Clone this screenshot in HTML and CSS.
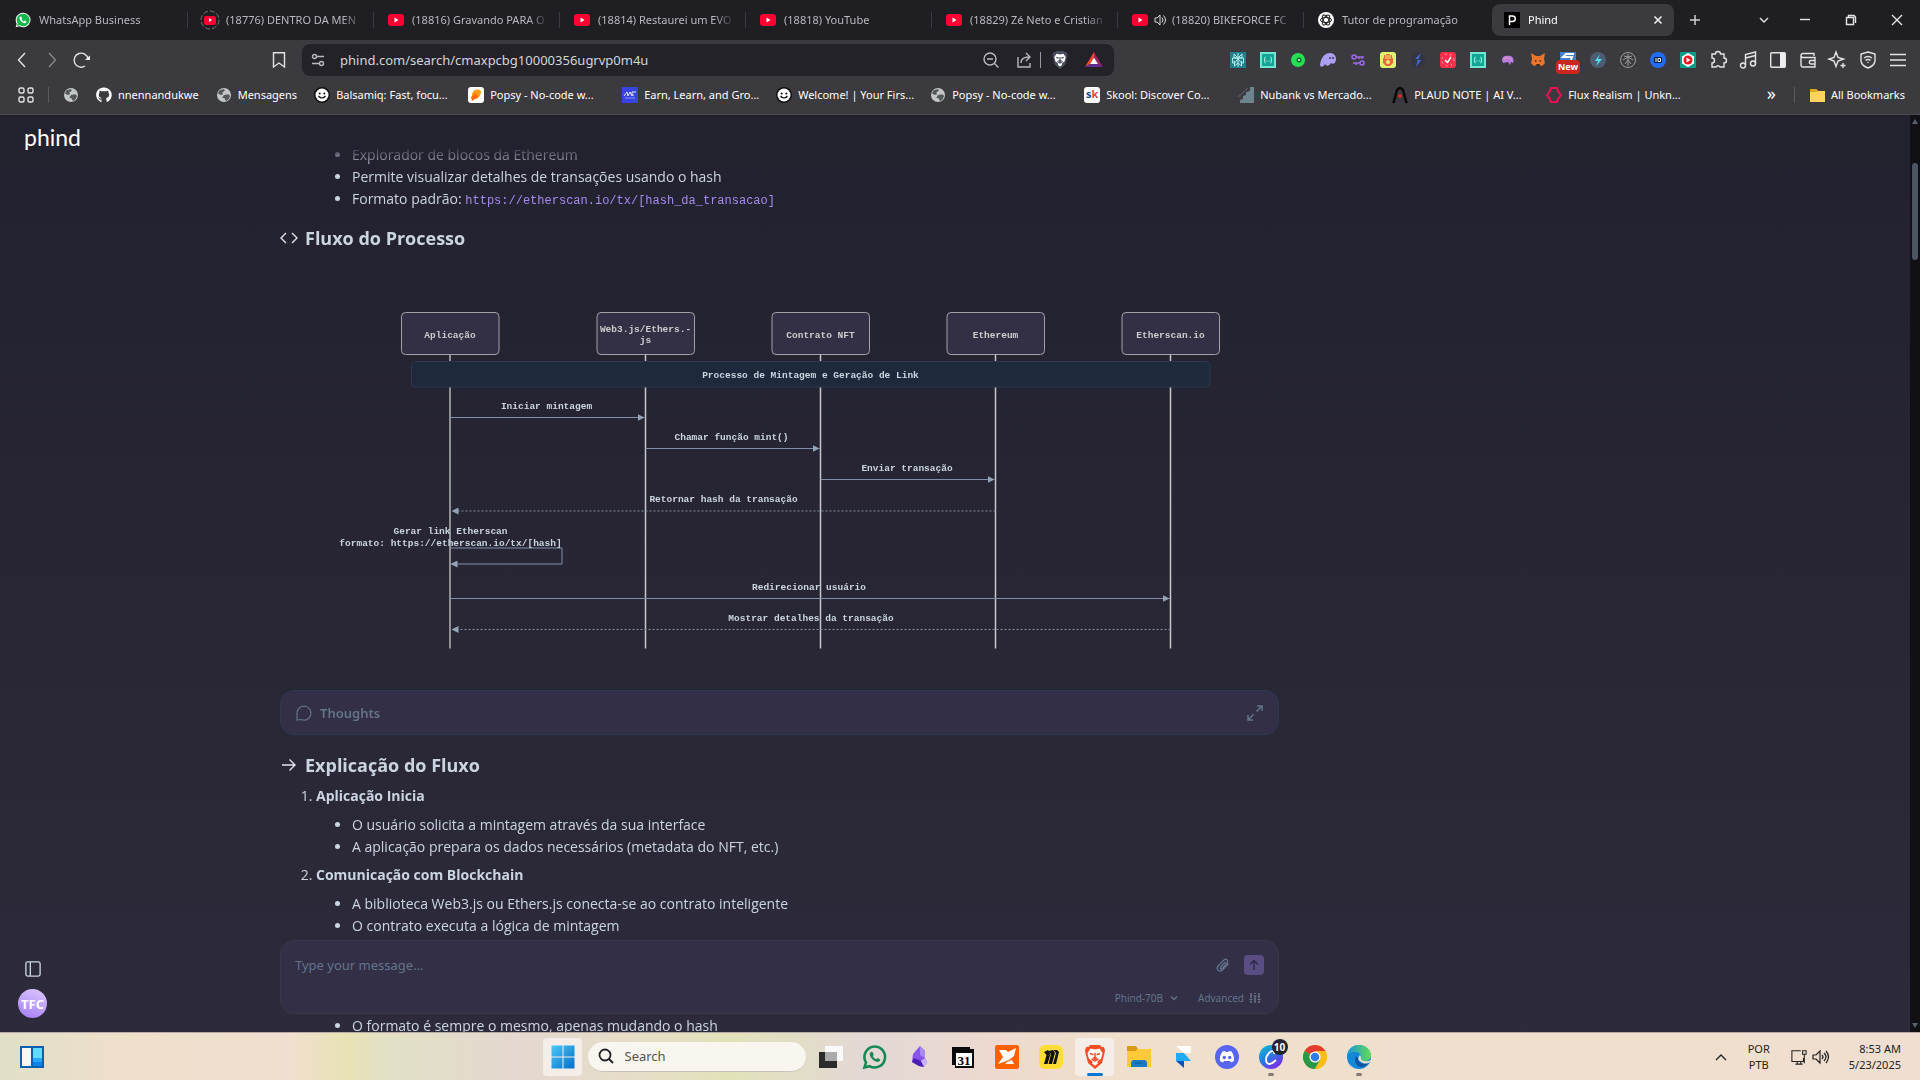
FILE: index.html
```html
<!DOCTYPE html>
<html lang="pt">
<head>
<meta charset="utf-8">
<title>Phind</title>
<link rel="stylesheet" href="styles.css">
</head>
<body>
<svg class="defs" aria-hidden="true">
  <symbol id="yt" viewBox="0 0 16 16"><rect y="2" width="16" height="12" rx="3" fill="#ff0033"/><path d="M6.500 5.500v5L10.500 8z" fill="#fff"/></symbol>
  <symbol id="wa" viewBox="0 0 24 24"><path d="M12 1a11 11 0 0 0-9.500 16.500L1 23l5.700-1.500A11 11 0 1 0 12 1z" fill="#fff"/><path d="M12 2.500a9.500 9.500 0 0 0-8 14.500L3 21l4.200-1A9.500 9.500 0 1 0 12 2.500z" fill="#12b84a"/><path d="M8.200 6.800c-1.500.6-2 2.600-.7 4.900 1.500 2.700 4 4.800 6.600 5.200 1.700.2 3.100-1 3.100-2.500l-2.500-1.500-1.400 1.300c-1.600-.6-2.700-1.700-3.500-3.200l1-1.300-1.300-2.700z" fill="#fff"/></symbol>
  <symbol id="globe" viewBox="0 0 16 16"><circle cx="8" cy="8" r="8" fill="#c4c7c9"/><path d="M3 2.500 8 1l1 2-3 2 1 2-3 1L1 6zM8 8l5-1 2 2-2 4-3 2-1-3-3-1z" fill="#55585b"/></symbol>
  <symbol id="smile" viewBox="0 0 16 16"><circle cx="8" cy="8" r="8" fill="#111"/><circle cx="8" cy="8" r="6.500" fill="#fff"/><circle cx="5.700" cy="6.500" r="1" fill="#111"/><circle cx="10.300" cy="6.500" r="1" fill="#111"/><path d="M4.500 9q3.500 4 7 0" fill="none" stroke="#111" stroke-width="1.200"/></symbol>
  <symbol id="code" viewBox="0 0 16 16"><path d="M0 0h16v16H0z" fill="#6ee7d5"/><path d="M2 2h12v12H2z" fill="#12a594"/><path d="M5.500 5c-1.500 0 0 3-1.500 3 1.500 0 0 3 1.500 3m5-6c1.500 0 0 3 1.500 3-1.500 0 0 3-1.500 3M6.500 9h1m1.500 0h.8" fill="none" stroke="#d6fff8"/></symbol>
  <symbol id="lion" viewBox="0 0 24 24"><path d="m7 0-1.500 2-2-.2L2 5l.5 3L5 18l7 6 7-6 2.500-10 .5-3-1.500-3.200-2 .2L17 0z"/><path d="M7.500 3.500 4.500 8l1.300 5.500 3.700 3-.3 2 2.800 2.200 2.800-2.200-.3-2 3.700-3L19.500 8l-3-4.500-4.500 1z" fill="#fff"/><path d="m7 8.500 3.500 1.200M17 8.500l-3.500 1.200M8.500 14l3.500 2 3.500-2M12 8v5m-2-.5 2 1.500 2-1.500" fill="none" stroke="currentColor" stroke-width="1.500"/></symbol>
</svg>

<header class="browser">
  <nav class="tabs">
    <a class="tab" href="#"><svg class="i16"><use href="#wa"/></svg><span>WhatsApp Business</span></a>
    <a class="tab" href="#"><svg class="i16 loading" viewBox="0 0 16 16"><circle cx="8" cy="8" r="9" fill="none" stroke="#777" stroke-dasharray="5 2"/><rect x="2" y="4" width="12" height="9" rx="2" fill="#f03"/><path d="M7 6v4l3-2z" fill="#fff"/></svg><span>(18776) DENTRO DA MEN</span></a>
    <a class="tab" href="#"><svg class="i16"><use href="#yt"/></svg><span>(18816) Gravando PARA O</span></a>
    <a class="tab" href="#"><svg class="i16"><use href="#yt"/></svg><span>(18814) Restaurei um EVO</span></a>
    <a class="tab" href="#"><svg class="i16"><use href="#yt"/></svg><span>(18818) YouTube</span></a>
    <a class="tab" href="#"><svg class="i16"><use href="#yt"/></svg><span>(18829) Zé Neto e Cristian</span></a>
    <a class="tab sound" href="#"><svg class="i16"><use href="#yt"/></svg><svg class="i12" viewBox="0 0 12 12"><path d="M1 4h2l3-3v10L3 8H1z" fill="none" stroke="#ddd"/><path d="M8 3.500q2 2.500 0 5M9.500 1.500q4 4.500 0 9" fill="none" stroke="#ddd"/></svg><span>(18820) BIKEFORCE FC</span></a>
    <a class="tab" href="#"><svg class="i16" viewBox="0 0 16 16"><circle cx="8" cy="8" r="8" fill="#fff"/><g fill="none" stroke="#222"><ellipse cx="8" cy="8" rx="5.500" ry="2.600"/><ellipse cx="8" cy="8" rx="5.500" ry="2.600" transform="rotate(60 8 8)"/><ellipse cx="8" cy="8" rx="5.500" ry="2.600" transform="rotate(120 8 8)"/></g></svg><span>Tutor de programação</span></a>
    <a class="tab active" href="#"><svg class="i16" viewBox="0 0 16 16"><path d="M0 0h16v16H0z"/><path d="M5.500 13V4h1.500m-1.500 5.500h3a2.700 2.700 0 0 0 0-5.500H7" fill="none" stroke="#fff" stroke-width="1.500"/></svg><span>Phind</span><svg class="i12" viewBox="0 0 12 12"><path d="m2.500 2.500 7 7m0-7-7 7" stroke="#eee" stroke-width="1.600"/></svg></a>
    <button class="plus" aria-label="New tab"><svg class="i12" viewBox="0 0 12 12"><path d="M6 1v10M1 6h10" stroke="#d0d0d3" stroke-width="1.500"/></svg></button>
    <div class="window-buttons">
      <button aria-label="Search tabs"><svg class="i12" viewBox="0 0 12 12"><path d="m2 4 4 4 4-4" class="line" stroke-width="1.800"/></svg></button>
      <button aria-label="Minimize"><svg class="i12" viewBox="0 0 12 12"><path d="M1 5.500h10" class="line"/></svg></button>
      <button aria-label="Restore"><svg class="i12" viewBox="0 0 12 12"><path d="M1.500 3.500h7v7h-7zM3.500 3V1.500H9l1.500 1.500v6" class="line"/></svg></button>
      <button aria-label="Close"><svg class="i12" viewBox="0 0 12 12"><path d="m1 1 10 10m0-10L1 11" class="line"/></svg></button>
    </div>
  </nav>

  <div class="toolbar">
    <div class="history">
      <button aria-label="Back"><svg class="i16" viewBox="0 0 16 16"><path d="M11 1 4.500 8l6.500 7" class="line" stroke-width="1.700"/></svg></button>
      <button aria-label="Forward" class="off"><svg class="i16" viewBox="0 0 16 16"><path d="m5 1 6.500 7L5 15" class="line" stroke-width="1.500"/></svg></button>
      <button aria-label="Reload"><svg class="i16" viewBox="0 0 16 16"><path d="M11 14a7 7 0 1 1 3-7" class="line" stroke-width="1.600"/><path d="M16 3.500V8h-5z" fill="#eee"/></svg></button>
    </div>
    <button class="mark" aria-label="Bookmark"><svg class="i16" viewBox="0 0 16 16"><path d="M2.500.7h11V15L8 11l-5.500 4z" class="line" stroke-width="1.500"/></svg></button>
    <div class="address">
      <svg class="w14" viewBox="0 0 14 14"><g class="line"><circle cx="3.500" cy="3.500" r="2"/><path d="M6 3.500h7M1 10.500h7"/><circle cx="10.500" cy="10.500" r="2"/></g></svg>
      <input type="text" aria-label="Address" value="phind.com/search/cmaxpcbg10000356ugrvp0m4u">
      <svg class="i16" viewBox="0 0 16 16"><g class="line"><circle cx="7" cy="7" r="6"/><path d="m11.500 11.500 4 4M4 7h6"/></g></svg>
      <svg class="i16 share" viewBox="0 0 16 16"><path d="M1 5v10h12v-4M4 11c0-4 3-6 8-6m-3-4 4 4-4 4" class="line"/></svg>
      <i class="rule"></i>
      <svg class="i18 shield"><use href="#lion"/></svg>
      <svg class="i18" viewBox="0 0 18 18"><path d="M9 1 0 16l5-3 4-7z" fill="#ff4724"/><path d="m9 1 9 15-5-3-4-7z" fill="#9e1f63"/><path d="m5 13-5 3h18l-5-3z" fill="#662d91"/><path d="M9 6.500 13 13H5z" fill="#fff"/></svg>
    </div>
    <div class="extensions">
      <svg class="i16" viewBox="0 0 16 16"><path d="M0 0h16v16H0z" fill="#20808d"/><path d="M8 1v14M4 2l4 4 4-4v4H4zM2.500 6h11v5h-2L8 7l-3.500 4h-2zM4.500 9v5L8 11l3.500 3V9" fill="none" stroke="#b9ecec"/></svg>
      <svg class="i16"><use href="#code"/></svg>
      <svg class="i16" viewBox="0 0 16 16"><circle cx="8" cy="8" r="7" fill="#25e052"/><circle cx="9" cy="8" r="2.500" fill="#0b6627"/><circle cx="9" cy="8" r="1" fill="#fff"/></svg>
      <svg class="i16" viewBox="0 0 16 16"><path d="M0 13C1 5 5 1 10 1c4 0 6 3 6 6 0 4-3 6-5 4-2 3-4 4-6 1-2 4-5 3-5 1z" fill="#ab9ff2"/><path d="M10 5v2m3-2v2" stroke="#3d3455" stroke-width="1.500"/></svg>
      <svg class="i16" viewBox="0 0 16 16" fill="none" stroke="#9b6be8" stroke-width="1.500"><circle cx="4" cy="5" r="2"/><path d="M6 5h8M9 5v2m3-2v2"/><circle cx="12" cy="11" r="2"/><path d="M10 11H3m3 0v2"/></svg>
      <svg class="i16" viewBox="0 0 16 16"><rect width="16" height="16" rx="3" fill="#dff56b"/><path d="M3 6h1V3h2V2h4v1h2v3h1v5l-3 3H6l-3-3z" fill="#ee6741"/><path d="M6 3v4m2-4v4m2-4v4" stroke="#dff56b"/><circle cx="8" cy="10" r="2" fill="#dff56b"/></svg>
      <svg class="i16" viewBox="0 0 16 16"><circle cx="8" cy="8" r="7" fill="#343442"/><path d="M11 1 5 7h3l-2 8 5-7H8z" fill="#416ee0"/></svg>
      <svg class="i16" viewBox="0 0 16 16"><rect width="16" height="16" rx="3" fill="#fa304a"/><path d="m5 8 2.500 2.500L11 5" fill="none" stroke="#fff" stroke-width="1.500"/><circle cx="8" cy="8" r="6" fill="none" stroke="#fff" stroke-dasharray="1 4"/></svg>
      <svg class="i16"><use href="#code"/></svg>
      <svg class="i16" viewBox="0 0 16 16"><path d="M2 8c0-4 4-5 7-4 3-1 6 4 4 7l-2-1-1 3-2-3-5 1z" fill="#b67be0"/><path d="M4 7q3-3 8 1" fill="none" stroke="#f59dac"/></svg>
      <svg class="i16" viewBox="0 0 16 16"><path d="m1 1 5 3h4l5-3-1 6 1 4-3 3-3-1H7l-3 1-3-3 1-4z" fill="#e8752b"/><path d="m5 8 2 1-2 1zm6 0-2 1 2 1zM6.500 12h3v2h-3z" fill="#40251a"/></svg>
      <span class="new"><svg class="i16" viewBox="0 0 16 16"><path d="M0 0h16v8H0z" fill="#3f80c8"/><path d="M14 2H6l-3 3h9l-1 3" stroke="#fff" stroke-width="2" fill="none"/></svg><b>New</b></span>
      <svg class="i16" viewBox="0 0 16 16"><circle cx="8" cy="8" r="8" fill="#4d5d74"/><path d="M10 2 5 9h3l-2 5 6-7H8z" fill="#52e3e8"/></svg>
      <svg class="i16" viewBox="0 0 16 16" fill="none" stroke="#9d9da0"><circle cx="8" cy="8" r="7.500"/><path d="M8 5v9M8 5l5 3M8 5 3 8m5 0 3 4M8 8l-3 4M4 4l4 1 4-1M8 2v3"/></svg>
      <svg class="i16" viewBox="0 0 16 16"><circle cx="8" cy="8" r="8" fill="#1f6df2"/><rect x="4" y="5" width="8" height="6" rx="1" fill="#071b46"/><path d="M6 6v4m2-3.500h2.500v3H8z" stroke="#fff" fill="none"/></svg>
      <svg class="i16" viewBox="0 0 16 16"><path d="M0 0h16v16H0z" fill="#0d9f86"/><path d="m8 1 6 3.500v7L8 15l-6-3.500v-7z" fill="#fff"/><circle cx="8" cy="8" r="4.500" fill="#e51b23"/><path d="M6.500 5.500v5l4-2.500z" fill="#fff"/></svg>
      <svg class="i18" viewBox="0 0 18 18"><path d="M3 3h3.500a2.500 2.500 0 0 1 5 0H15v4a2.500 2.500 0 0 1 0 5v4h-4a2.200 2.200 0 0 0-4 0H3v-4a2.500 2.500 0 0 0 0-5z" class="line"/></svg>
      <svg class="i18" viewBox="0 0 18 18"><g class="line"><circle cx="4" cy="14.500" r="2.500"/><circle cx="14" cy="12.500" r="2.500"/><path d="M6.500 14V3.500l10-2.500v11.500M6.500 7l10-2.500"/></g></svg>
      <svg class="i16" viewBox="0 0 16 16"><rect x=".7" y=".7" width="14.600" height="14.600" rx="1" class="line"/><path d="M10 1h5v14h-5z" fill="#eee"/></svg>
      <svg class="i16" viewBox="0 0 16 16"><path d="M14 4V1.500H3a2 2 0 0 0 0 4h12V15H3a2 2 0 0 1-2-2V3.500M15 8.500h-4a1.500 1.500 0 0 0 0 3.500h4" class="line"/></svg>
      <svg class="i18" viewBox="0 0 18 18"><path d="m7 1 2 5.500L14.500 8 9 10l-2 5.500L5 10 0 8l5-1.500zM14 12v5m-2.500-2.500h5" class="line"/></svg>
      <svg class="i18" viewBox="0 0 18 18"><path d="m9 1 7 2v7q-1 5-7 7-6-2-7-7V3zM5 7q4-3 8 0M6.500 9.500q2.500-2 5 0M9 11v1" class="line"/></svg>
      <svg class="i16" viewBox="0 0 16 16"><path d="M0 2.500h16M0 8h16M0 13.500h16" class="line"/></svg>
    </div>
  </div>

  <nav class="bookmarks">
    <svg class="i16 apps" viewBox="0 0 16 16"><g class="line"><rect x="1" y="1" width="5" height="5" rx="1.500"/><rect x="10" y="1" width="5" height="5" rx="1.500"/><rect x="1" y="10" width="5" height="5" rx="1.500"/><rect x="10" y="10" width="5" height="5" rx="1.500"/></g></svg>
    <i class="divider"></i>
    <a href="#"><svg class="i14"><use href="#globe"/></svg></a>
    <a href="#"><svg class="i16" viewBox="0 0 16 16"><path d="M8 .5a7.500 7.500 0 0 0-2.500 14.700v-2.500c-2 .4-2.500-1-2.500-1l-1-1.200c1.600-.2 1.700 1.300 2.700 1.300l1-.8c-2-.3-3-1.500-3-3.500l.8-2-.1-2 2 .8h5l2-.8v2l.8 2c0 2-1 3.200-3 3.500l.5 4.100A7.500 7.500 0 0 0 8 .5z" fill="#fff"/></svg>nnennandukwe</a>
    <a href="#"><svg class="i14"><use href="#globe"/></svg>Mensagens</a>
    <a class="wide" href="#"><svg class="i16"><use href="#smile"/></svg>Balsamiq: Fast, focu...</a>
    <a class="wide" href="#"><svg class="i16" viewBox="0 0 16 16"><rect width="16" height="16" rx="3" fill="#fff"/><path d="M4 7c1-4 5-6 9-3 0 4-2 7-5 8H4z" fill="#ff9d14"/><path d="m3 10 5-4 2 4-6 4z" fill="#ff6a13"/></svg>Popsy - No-code w...</a>
    <a class="wide" href="#"><svg class="i16" viewBox="0 0 16 16"><path d="M0 0h16v16H0z" fill="#3944e0"/><path d="m2 9 3-4 1 4 2-4 2 4V5h4m-3 2v2" fill="none" stroke="#e6e8ff"/><path d="M3 11h10" stroke="#8490ff"/></svg>Earn, Learn, and Gro...</a>
    <a class="wide" href="#"><svg class="i16"><use href="#smile"/></svg>Welcome! | Your Firs...</a>
    <a class="wide" href="#"><svg class="i14"><use href="#globe"/></svg>Popsy - No-code w...</a>
    <a class="wide" href="#"><span class="sk"><b>s</b><b>k</b></span>Skool: Discover Co...</a>
    <a class="wide" href="#"><svg class="i16" viewBox="0 0 16 16"><path d="M2 16V13l3-1V9l3-1V5l4-1V0h4v16z" fill="#6d838e"/><path d="M0 10 10 1" stroke="#596a73"/></svg>Nubank vs Mercado...</a>
    <a class="wide" href="#"><svg class="i16" viewBox="0 0 16 16"><path d="M1.500 16 5 3q3-4 6 0l3.500 13" fill="none" stroke="#080808" stroke-width="2.500"/><circle cx="8" cy="9" r="2" fill="#d12b24"/></svg>PLAUD NOTE | AI V...</a>
    <a class="wide" href="#"><svg class="i16" viewBox="0 0 16 16"><path d="M5 1h6l1 3 3 4-3 4-1 3H5l-1-3-3-4 3-4z" fill="none" stroke="#f50d54" stroke-width="2"/></svg>Flux Realism | Unkn...</a>
    <span class="more">»</span><i class="divider"></i>
    <a href="#" class="all"><svg class="i16" viewBox="0 0 16 16"><path d="M1 2h6l2 2h7v11H1z" fill="#ffd35c"/><path d="M1 2h6l2 2-2 1H1z" fill="#e2a528"/></svg>All Bookmarks</a>
  </nav>
</header>

<div class="page">
  <aside class="side">
    <a class="logo" href="#">phind</a>
    <div class="side-foot">
      <button aria-label="Sidebar"><svg class="i16" viewBox="0 0 18 18"><g fill="none" stroke="#cbd5e1" stroke-width="1.500"><rect x="1" y="1" width="16" height="16" rx="2"/><path d="M6 1v16"/></g></svg></button>
      <button class="avatar">TFC</button>
    </div>
  </aside>
  <main>
    <article>
      <ul class="top-list">
        <li>Explorador de blocos da Ethereum</li>
        <li>Permite visualizar detalhes de transações usando o hash</li>
        <li>Formato padrão: <code>https://etherscan.io/tx/[hash_da_transacao]</code></li>
      </ul>
      <h3><svg class="i18" viewBox="0 0 18 18"><path d="M6 4 1 9l5 5m6-10 5 5-5 5" class="line"/></svg>Fluxo do Processo</h3>
      <svg class="diagram" viewBox="0 0 1998 720">
        <defs><marker id="arrow" markerWidth="14" markerHeight="14" refX="14" refY="7" orient="auto" markerUnits="userSpaceOnUse"><path d="M0 0 14 7 0 14z" fill="#94a3b8"/></marker></defs>
        <g class="life"><path d="M340 109v588" stroke-width="4" stroke="#8f8f96"/><path d="M731 109v588M1081 109v588M1431 109v588M1781 109v588"/></g>
        <g class="actor"><rect x="243" y="25" width="195" height="84" rx="8"/><rect x="634" y="25" width="195" height="84" rx="8"/><rect x="984" y="25" width="195" height="84" rx="8"/><rect x="1334" y="25" width="195" height="84" rx="8"/><rect x="1684" y="25" width="195" height="84" rx="8"/></g>
        <rect x="263" y="123" width="1597" height="51" rx="8" class="band"/>
        <g class="name"><text x="340" y="76">Aplicação</text><text x="731" y="64">Web3.js/Ethers.-</text><text x="731" y="86">js</text><text x="1081" y="76">Contrato NFT</text><text x="1431" y="76">Ethereum</text><text x="1781" y="76">Etherscan.io</text></g>
        <g class="msg"><path d="M340 235h389"/><path d="M731 297h348"/><path d="M1081 359h348"/><path d="M1431 422H343" class="dash"/><path d="M341 496h223v32H341"/><path d="M341 597h1438"/><path d="M1781 659H343" class="dash"/></g>
        <g class="label"><text x="1061" y="156">Processo de Mintagem e Geração de Link</text><text x="533" y="218">Iniciar mintagem</text><text x="903" y="280">Chamar função mint()</text><text x="1254" y="342">Enviar transação</text><text x="887" y="404">Retornar hash da transação</text><text x="341" y="468">Gerar link Etherscan</text><text x="341" y="492">formato: https://etherscan.io/tx/[hash]</text><text x="1058" y="580">Redirecionar usuário</text><text x="1062" y="642">Mostrar detalhes da transação</text></g>
      </svg>
      <button class="thoughts"><svg class="i16" viewBox="0 0 16 16"><path d="M1 15V8a7 7 0 1 1 4 6.500z" fill="none" stroke="currentColor" stroke-width="1.200"/></svg><span>Thoughts</span><svg class="i16" viewBox="0 0 16 16"><path d="M9.500 6.500 15 1m-5 0h5v5M6.500 9.500 1 15m5 0H1v-5" fill="none" stroke="currentColor" stroke-width="1.500"/></svg></button>
      <h3><svg class="i18" viewBox="0 0 18 18"><path d="M2 9h12M9.500 3.500 15 9l-5.500 5.500" class="line"/></svg>Explicação do Fluxo</h3>
      <ol>
        <li><strong>Aplicação Inicia</strong>
          <ul><li>O usuário solicita a mintagem através da sua interface</li><li>A aplicação prepara os dados necessários (metadata do NFT, etc.)</li></ul></li>
        <li><strong>Comunicação com Blockchain</strong>
          <ul><li>A biblioteca Web3.js ou Ethers.js conecta-se ao contrato inteligente</li><li>O contrato executa a lógica de mintagem</li></ul>
          <ul class="after"><li>O formato é sempre o mesmo, apenas mudando o hash</li></ul></li>
      </ol>
    </article>
    <form class="composer">
      <div class="row">
        <input type="text" aria-label="Message" placeholder="Type your message...">
        <button type="button" aria-label="Attach"><svg class="i14" viewBox="0 0 14 14"><path d="m12.500 5.500-6 6.500c-3 3-7-1-4.500-4L8 2c2-2 5 .5 3 3L6 10.500c-1 1-2.500 0-1.500-1.500l5-5" fill="none" stroke="currentColor" stroke-width="1.200"/></svg></button>
        <button type="button" class="send" aria-label="Send"><svg class="i12" viewBox="0 0 12 12"><path d="M6 11V1.500M2 5.500l4-4 4 4" fill="none" stroke="currentColor" stroke-width="1.500"/></svg></button>
      </div>
      <div class="row options">
        <button type="button">Phind-70B<svg class="i12" viewBox="0 0 12 12"><path d="m3 4.500 3 3 3-3" fill="none" stroke="currentColor" stroke-width="1.300"/></svg></button>
        <button type="button">Advanced<svg class="i12" viewBox="0 0 12 12"><path d="M2 1v5m0 3v2M.5 7.500h3M6 1v1m0 3v6M4.500 4h3M10 1v5m0 3v2M8.500 7.500h3" stroke="currentColor" stroke-width="1.600"/></svg></button>
      </div>
    </form>
  </main>
  <div class="scrollbar"><i class="up"></i><i class="thumb"></i><i class="down"></i></div>
</div>

<footer class="taskbar">
  <button class="widgets" aria-label="Widgets"><svg viewBox="0 0 24 22" width="24" height="22"><path d="M0 0h24v22H0z" fill="#0b5fb0"/><path d="M2 2h9v18H2z" fill="#f6f6f6"/><path d="M13 2h9v10h-9z" fill="#63dbff"/><path d="M13 12h9v4h-9z" fill="#24a7f7"/><path d="M13 16h9v4h-9z" fill="#0b82e8"/></svg></button>
  <div class="apps-row">
    <button class="slot" aria-label="Start"><span class="tile"><svg class="i24" viewBox="0 0 24 24"><defs><linearGradient id="win" x2="1" y2="1"><stop stop-color="#4cc7f7"/><stop offset="1" stop-color="#036fcb"/></linearGradient></defs><path d="M.5.500h11v11H.5zM12.500.5h11v11h-11zM.5 12.500h11v11H.5zM12.500 12.500h11v11h-11z" fill="url(#win)"/></svg></span></button>
    <label class="search"><svg class="i16" viewBox="0 0 16 16"><circle cx="7" cy="7" r="5.500" fill="none" stroke="#222" stroke-width="1.800"/><path d="m11 11 4 4" stroke="#222" stroke-width="2"/></svg><input type="text" aria-label="Search" placeholder="Search"></label>
    <button class="slot" aria-label="Task view"><svg class="i24" viewBox="0 0 24 24"><path d="M6 1h18v15H6z" fill="#fafafa"/><path d="M0 7h18v16H0z" fill="#2b2b2b"/><path d="M6 7h12v9H6z" fill="#aaa"/></svg></button>
    <button class="slot" aria-label="WhatsApp"><svg class="i24" viewBox="0 0 24 24"><path d="M12 1.500A10.500 10.500 0 0 0 3 17.500l-1.500 5 5-1.300A10.500 10.500 0 1 0 12 1.500z" fill="none" stroke="#158a55" stroke-width="2.600"/><path d="M8.200 6.800c-1.500.6-2 2.600-.7 4.900 1.500 2.700 4 4.800 6.600 5.200 1.700.2 3.100-1 3.100-2.500l-2.500-1.500-1.400 1.300c-1.600-.6-2.700-1.700-3.500-3.200l1-1.300-1.300-2.700z" fill="#158a55"/></svg></button>
    <button class="slot" aria-label="Obsidian"><svg class="i24" viewBox="0 0 24 24"><path d="m13 1 5 5v7l2 4-3 5-5-1-7-4 1-8z" fill="#8a55ea"/><path d="m13 1 5 5v7l-5-3z" fill="#a98af5"/><path d="m5 17 2-4 7 3 3 6-5-1z" fill="#4b1eb0"/><path d="m14 16 4-3 2 4-3 5z" fill="#c8b2ff"/></svg></button>
    <button class="slot" aria-label="Calendar"><svg class="i24" viewBox="0 0 24 24"><path d="M1 2h18v2h4v19H4v-3H1z" fill="#0a0a0a"/><path d="M5 8h16v13H5z" fill="#fff"/><text x="13" y="20" class="day">31</text></svg></button>
    <button class="slot" aria-label="Foxit"><svg class="i24" viewBox="0 0 24 24"><rect width="24" height="24" rx="2" fill="#ff6100"/><path d="M4 5h7l2 2 8-4-2 8-5 4-11 4 5-7zM12 17l5-2 2 4h-9z" fill="#fff"/></svg></button>
    <button class="slot" aria-label="Miro"><svg class="i24" viewBox="0 0 24 24"><rect width="24" height="24" rx="6" fill="#ffdd33"/><path d="m5 7 2.500 3L5 19h3.500l3-10L9 5zm4.500-1 2.500 3-2.500 10H13l3-11-2-3zm5-1L17 8l-3 11h3l3-12-2-2z" fill="#111"/></svg></button>
    <button class="slot" aria-label="Brave"><span class="tile"><svg class="i24 brave"><use href="#lion"/></svg></span><i class="mark-on"></i></button>
    <button class="slot" aria-label="Files"><svg class="i24" viewBox="0 0 24 24"><path d="M0 1h9l2 3h11v5H0z" fill="#d79b13"/><path d="M0 6h8l3-2h13v18H0z" fill="#ffc937"/><path d="M4 22v-5l2-2h12l2 2v5z" fill="#157bc4"/><path d="M8 18h8" stroke="#0c5b9c"/></svg></button>
    <button class="slot" aria-label="Framer"><svg class="i24" viewBox="0 0 24 24"><path d="M5 1h15v7h-7z" fill="#fff"/><path d="M5 8h8l7 8H5z" fill="#1facf5"/><path d="M5 16h8v7z" fill="#0753b9"/></svg></button>
    <button class="slot" aria-label="Discord"><svg class="i24" viewBox="0 0 24 24"><circle cx="12" cy="12" r="12" fill="#5865f2"/><path d="M7.500 6.500 10 6l.7 1h2.600l.7-1 2.500.5c2 3 3 6 2.500 9.500l-3 1.500-1-1.500h-6l-1 1.500L5 16c-.5-3.500.5-6.500 2.500-9.500z" fill="#fff"/><circle cx="9.300" cy="12.500" r="1.700" fill="#5865f2"/><circle cx="14.700" cy="12.500" r="1.700" fill="#5865f2"/></svg></button>
    <button class="slot" aria-label="Canva"><svg class="i24" viewBox="0 0 24 24"><defs><linearGradient id="cv" x2=".7" y2="1"><stop stop-color="#08c4cc"/><stop offset=".5" stop-color="#287de0"/><stop offset="1" stop-color="#7d2ae8"/></linearGradient></defs><circle cx="12" cy="12" r="12" fill="url(#cv)"/><path d="M15 9c1-3-2-4-5-1-4 4-4 10 0 11 3 0 5-2 7-4" fill="none" stroke="#fff" stroke-width="1.800"/></svg><b class="badge">10</b><i class="mark-dot"></i></button>
    <button class="slot" aria-label="Chrome"><svg class="i24" viewBox="0 0 24 24"><circle cx="12" cy="12" r="12" fill="#f9bd17"/><path d="M12 12 1.600 6A12 12 0 0 1 22.400 6z" fill="#e33b2e"/><path d="M12 12 1.600 6A12 12 0 0 0 12 24l5-9z" fill="#279847"/><path d="M12 6h10.400A12 12 0 0 1 12 24l5.200-9z" fill="#f9bd17"/><circle cx="12" cy="12" r="5.600" fill="#fff"/><circle cx="12" cy="12" r="4.300" fill="#2f7de9"/></svg></button>
    <button class="slot" aria-label="Edge"><svg class="i24" viewBox="0 0 24 24"><defs><linearGradient id="ed"><stop stop-color="#1994d8"/><stop offset="1" stop-color="#62dd55"/></linearGradient></defs><circle cx="12" cy="12" r="12" fill="#1288d8"/><path d="M0 11C1 3 7 0 12 0c7 0 12 5 12 10 0 4-3 6-7 6-3 0-4-2-3-4 0-3-2-5-6-5-4 0-7 2-8 4z" fill="url(#ed)"/><path d="M9 11c-3 6 1 12 8 11l5-4c-6 2-11 0-11-5z" fill="#0b55a4"/><path d="M13 10q-4 4 1 7t9 0l1-2q-4 2-7 1-4-1-3-4z" fill="#eddccc"/></svg><i class="mark-dot"></i></button>
  </div>
  <div class="tray">
    <svg class="i12" viewBox="0 0 12 12"><path d="m1 9 5-5 5 5" fill="none" stroke="#222" stroke-width="1.400"/></svg>
    <span class="lang">POR<br>PTB</span>
    <svg class="i16" viewBox="0 0 18 18"><path d="M11 2H1v12h13v-4M5 17h8M7 14v3m4-3v3M13 2h4v4h-4zM15 6v10" fill="none" stroke="#222" stroke-width="1.200"/></svg>
    <svg class="i18" viewBox="0 0 18 18"><path d="M1 7h3l4-4v12l-4-4H1zM10 7q2 2 0 4m2-6q4 4 0 8m2-10q5 6 0 12" fill="none" stroke="#222" stroke-width="1.200"/></svg>
    <span class="clock">8:53 AM<br>5/23/2025</span>
  </div>
</footer>
</body>
</html>
```
FILE: styles.css
```css
* { box-sizing: border-box; }
body { margin: 0; height: 100vh; display: flex; flex-direction: column; overflow: hidden; font: 11px/16px "Noto Sans", "Open Sans", sans-serif; color: #fff; background: #22212e; }
button, input { font: inherit; color: inherit; background: none; border: 0; padding: 0; outline: 0; min-width: 0; }
button { display: flex; align-items: center; justify-content: center; }
a { color: inherit; text-decoration: none; }
svg { flex: none; overflow: visible; }
.defs { position: absolute; width: 0; height: 0; }
.i12 { width: 12px; height: 12px; }
.i14, .w14 { width: 14px; height: 14px; }
.i16 { width: 16px; height: 16px; }
.i18 { width: 18px; height: 18px; }
.i24 { width: 24px; height: 24px; }
.line { fill: none; stroke: #e4e4e8; stroke-width: 1.4px; }

/* Browser window */
.browser { flex: none; background: #3b3a3f; border-bottom: 1px solid #4a494e; }
.tabs { display: flex; align-items: center; height: 40px; padding-left: 2px; background: #1f1e23; }
.tab { display: flex; align-items: center; gap: 8px; flex: 0 1 186px; height: 16px; padding: 0 10px 0 13px; border-right: 1px solid #3b3a40; color: #b9b9be; min-width: 0; }
.tab + .tab { padding-left: 14px; }
.tab span { flex: 1; overflow: hidden; white-space: nowrap; mask-image: linear-gradient(90deg, #000 85%, transparent); }
.tab.sound { gap: 6px; }
.tab:nth-child(8) { border: 0; }
.tab.active { flex-basis: 182px; height: 32px; margin-left: 2px; padding: 0 10px 0 12px; border: 0; border-radius: 8px; background: #3b3a3f; color: #fff; }
.plus { width: 42px; }
.window-buttons { display: flex; margin-left: auto; }
.window-buttons button { width: 46px; height: 32px; }
.window-buttons button:first-child { width: 36px; }
.toolbar { display: flex; align-items: center; height: 40px; padding: 0 14px; }
.history { display: flex; gap: 14px; }
.off { opacity: .45; }
.mark { margin-left: 181px; }
.address { display: flex; align-items: center; flex: none; width: 812px; height: 32px; margin-left: 15px; padding: 0 11px 0 9px; gap: 16px; border-radius: 8px; background: #232228; }
.address input { flex: 1; font-size: 13px; color: #d5d5da; margin-left: -1px; }
.address .line { stroke: #b9b9bf; }
.share { margin-left: 2px; }
.rule { width: 1px; height: 16px; margin: 0 -6px 0 -9px; background: #98989d; }
.shield { fill: #4b4e5e; color: #4b4e5e; }
.extensions { display: flex; align-items: center; margin-left: auto; }
.extensions > * { margin: 0 7px; }
.extensions > .i18 { margin: 0 6px; }
.extensions > :last-child { margin-right: 0; }
.new { position: relative; height: 16px; width: 16px; }
.new b { position: absolute; left: -4px; top: 8px; width: 24px; border-radius: 4px; background: #ca281d; font-size: 9px; line-height: 14px; text-align: center; }
.bookmarks { display: flex; align-items: center; height: 34px; padding: 0 15px 4px 18px; white-space: nowrap; }
.bookmarks a { display: flex; align-items: center; gap: 6px; margin-right: 17px; }
.bookmarks .i14 { margin: 0 1px; }
.bookmarks .wide { width: 154px; margin: 0; }
.divider { width: 1px; height: 16px; background: #5a595e; margin: 0 14px; }
.more { margin-left: auto; padding-right: 4px; font-size: 18px; line-height: 14px; padding-bottom: 4px; }
.bookmarks .all { margin: 0; }
.sk { width: 16px; height: 16px; border-radius: 3px; background: #fff; text-align: center; line-height: 14px; }
.sk b:first-child { color: #263c91; }
.sk b:last-child { color: #e34a32; }

/* Phind page */
.page { flex: 1; display: flex; min-height: 0; background: linear-gradient(#22212e, #2d2b3b); }
.side { width: 280px; flex: none; display: flex; flex-direction: column; justify-content: space-between; align-items: flex-start; padding: 7px 18px 14px; }
.logo { margin-left: 6px; font: 23px/30px Lato, sans-serif; }
.side-foot { display: flex; flex-direction: column; align-items: center; gap: 12px; }
.avatar { width: 29px; height: 29px; border-radius: 50%; background: linear-gradient(200deg, #dcc8fc, #a47cf8); font-size: 13px; font-weight: 700; }
main { position: relative; flex: 1; overflow: hidden; font-size: 13px; line-height: 22px; color: #cbd5e1; }
article { max-width: 999px; height: 100%; padding-top: 29px; overflow: hidden; mask-image: linear-gradient(transparent 30px, #000 54px); }
ul, ol { margin: 0; padding-left: 36px; }
ul { list-style: disc; }
li { font: 14px/22px "Open Sans", "Noto Sans", sans-serif; }
.top-list { padding-left: 72px; }
ol > li > ul { margin: 7px 0 6px; }
ol > li > .after { margin-top: 78px; }
code { font: 12px/16px "Liberation Mono", monospace; color: #a58bf3; }
h3 { display: flex; align-items: center; gap: 7px; margin: 14px 0 0; font: 700 18px/28px "Open Sans", "Noto Sans", sans-serif; }
.diagram { display: block; width: 100%; margin: 48px 0 30px; }
.life { stroke: #c7c7cb; stroke-width: 3px; }
.actor { fill: #333046; stroke: #a2a1a9; stroke-width: 2px; }
.band { fill: #1e293b; stroke: #2b384d; stroke-width: 2px; }
.msg { fill: none; stroke: #8190a6; stroke-width: 2px; }
.msg path { marker-end: url(#arrow); }
.dash { stroke-dasharray: 4 4; }
.diagram text { font: 700 19px "Liberation Mono", monospace; text-anchor: middle; }
.name { fill: #ccc; }
.label { fill: #cbd5e1; }
.thoughts { width: 100%; height: 45px; gap: 8px; padding: 0 15px; border: 1px solid #2d3b52; border-radius: 14px; background: #322f46; color: #64748b; font-weight: 600; }
.thoughts span { flex: 1; text-align: left; }
.thoughts + h3 { margin: 16px 0 6px; }
.composer { position: absolute; left: 0; bottom: 18px; width: 100%; max-width: 999px; height: 74px; padding: 13px 14px 7px; display: flex; flex-direction: column; justify-content: space-between; border: 1px solid #3a3749; border-radius: 14px; background: #322f46; color: #64748b; }
.row { display: flex; align-items: center; gap: 14px; }
.row input { flex: 1; height: 22px; }
::placeholder { color: inherit; opacity: 1; }
.send { width: 20px; height: 20px; border-radius: 4px; background: #5a4d83; color: #302c48; }
.options { justify-content: flex-end; gap: 18px; font-size: 10px; line-height: 16px; padding-right: 3px; }
.options button { gap: 5px; }
.scrollbar { flex: none; width: 10px; display: flex; flex-direction: column; align-items: center; padding: 4px 0; background: #111014; }
.up, .down { border: 3px solid transparent; }
.up { border-bottom: 5px solid #56606f; border-top: 0; }
.down { border-top: 5px solid #56606f; border-bottom: 0; margin-top: auto; }
.thumb { width: 6px; height: 97px; margin-top: 39px; border-radius: 3px; background: #4b5563; }

/* Windows taskbar */
.taskbar { flex: none; height: 48px; display: grid; grid-template-columns: 1fr auto 1fr; align-items: center; padding: 0 19px 0 20px; border-top: 1px solid #b9ada6; color: #222; background: linear-gradient(90deg, #e0dfc8, #eedfcb 6%, #f0dfd0 15%, #e9e2b5 18%, #e1e0c5 20%, #e4d8d0 27%, #e6ddc8 33%, #e1e2b9 38%, #e3d8d5 45%, #edd9cf 52%, #efdfcc 58%, #f0dfd0); }
.widgets { justify-self: start; }
.apps-row { display: flex; align-items: center; }
.slot { position: relative; width: 44px; height: 47px; }
.tile { display: flex; align-items: center; justify-content: center; width: 39px; height: 38px; border-radius: 4px; background: #f5eee8; }
.brave { fill: #fb4b24; color: #fb4b24; }
.search { display: flex; align-items: center; gap: 11px; width: 218px; height: 30px; margin: 0 3px; padding: 0 10px; border-radius: 15px; background: #f8f6ef; border-bottom: 1px solid #c8c4b8; }
.search input { flex: 1; font-size: 13px; color: #55534f; }
.mark-on, .mark-dot { position: absolute; bottom: 4px; left: 14px; width: 16px; height: 3px; border-radius: 2px; background: #0b76d5; }
.mark-dot { left: 19px; width: 6px; background: #847b74; }
.badge { position: absolute; left: 23px; top: 6px; width: 16px; height: 16px; border-radius: 50%; background: #23252b; color: #fff; font-size: 10px; text-align: center; }
.day { font: 700 13px "Liberation Serif", serif; text-anchor: middle; }
.tray { justify-self: end; display: flex; align-items: center; gap: 5px; }
.lang { margin: 0 16px; text-align: center; }
.clock { margin-left: 14px; text-align: right; }
```
